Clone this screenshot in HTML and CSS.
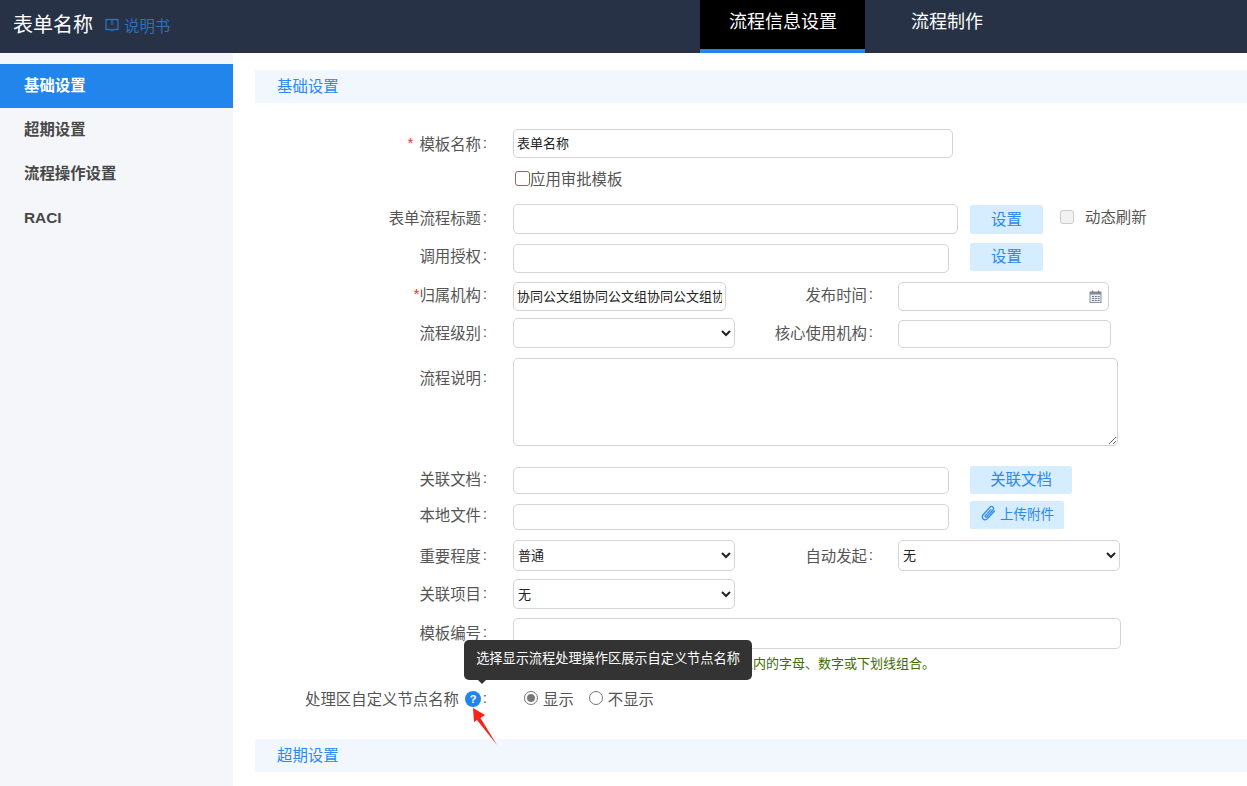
FILE: index.html
```html
<!DOCTYPE html>
<html lang="zh-CN">
<head>
<meta charset="utf-8">
<title>表单名称</title>
<link rel="stylesheet" href="styles.css">
</head>
<body>
<div class="app">
  <header class="topbar">
    <div class="brand">
      <span class="brand-title">表单名称</span>
      <a class="manual">
        <svg class="manual-icon" viewBox="0 0 14 14" width="14" height="14" fill="none" stroke="currentColor" stroke-width="1.3"><path d="M1 1.5h12v10H8.2L7 12.8 5.8 11.5H1z"/><path d="M7 2v5"/></svg>
        <span>说明书</span>
      </a>
    </div>
    <nav class="tabs">
      <a class="tab tab-active">流程信息设置</a>
      <a class="tab tab-next">流程制作</a>
    </nav>
  </header>
  <div class="main">
    <aside class="sidebar">
      <a class="side-item side-active">基础设置</a>
      <a class="side-item">超期设置</a>
      <a class="side-item">流程操作设置</a>
      <a class="side-item">RACI</a>
    </aside>
    <section class="content">
      <h2 class="bar">基础设置</h2>
      <form class="form">
        <div class="row r-name">
          <label class="label"><i class="req req-gap">*</i>模板名称<span class="colon">:</span></label>
          <input class="field w-440" type="text" value="表单名称">
        </div>
        <div class="row r-apply">
          <label class="apply"><input class="check-apply" type="checkbox">应用审批模板</label>
        </div>
        <div class="row r-title">
          <label class="label">表单流程标题<span class="colon">:</span></label>
          <div class="col-wide"><input class="field w-445" type="text"></div>
          <button class="btn b-set" type="button">设置</button>
          <label class="refresh"><input class="check-off" type="checkbox" disabled>动态刷新</label>
        </div>
        <div class="row r-auth">
          <label class="label">调用授权<span class="colon">:</span></label>
          <div class="col-wide"><input class="field w-436 nudge" type="text"></div>
          <button class="btn b-set b-short" type="button">设置</button>
        </div>
        <div class="row r-org">
          <label class="label"><i class="req">*</i>归属机构<span class="colon">:</span></label>
          <div class="col-half"><input class="field w-213" type="text" value="协同公文组协同公文组协同公文组协同公文组"></div>
          <label class="label label-2">发布时间<span class="colon">:</span></label>
          <div class="date">
            <input class="field w-211" type="text">
            <svg class="cal" viewBox="0 0 13 13" width="13" height="13"><rect x="1" y="2" width="11" height="10.5" fill="#eef0f6" stroke="#8a8f9a"/><rect x="1" y="2" width="11" height="2.5" fill="#7f8a96"/><path d="M3.5 .5v2.5M9.5 .5v2.5" stroke="#8c7a55" stroke-width="1.2"/><path d="M3 6.5h2M5.8 6.5h2M8.6 6.5h2M3 8.5h2M5.8 8.5h2M8.6 8.5h2M3 10.5h2M5.8 10.5h2M8.6 10.5h2" stroke="#6d7a92" stroke-width="1.2"/></svg>
          </div>
        </div>
        <div class="row r-level">
          <label class="label">流程级别<span class="colon">:</span></label>
          <div class="col-half"><select class="field select w-222 h-30"><option></option></select></div>
          <label class="label label-2">核心使用机构<span class="colon">:</span></label>
          <input class="field w-213 h-28 nudge-2" type="text">
        </div>
        <div class="row r-desc">
          <label class="label label-top">流程说明<span class="colon">:</span></label>
          <textarea class="field area"></textarea>
        </div>
        <div class="row r-doc">
          <label class="label">关联文档<span class="colon">:</span></label>
          <div class="col-wide"><input class="field w-436 h-27 nudge" type="text"></div>
          <button class="btn b-doc" type="button">关联文档</button>
        </div>
        <div class="row r-local">
          <label class="label">本地文件<span class="colon">:</span></label>
          <div class="col-wide"><input class="field w-436 h-26 nudge-3" type="text"></div>
          <button class="btn b-upload" type="button">
            <svg class="clip" viewBox="0 0 16 16" width="17" height="17" fill="none" stroke="currentColor" stroke-width="1.2" stroke-linecap="round"><path d="M13.6 5.6 7.2 12.6c-1.3 1.4-3.2 1.5-4.3.5s-1-2.8.3-4.2l6-6.6c.9-1 2.2-1.1 3-.4s.7 2-.2 3L6.6 11c-.5.5-1.1.6-1.5.2s-.3-1 .2-1.5l4.9-5.4"/></svg>上传附件
          </button>
        </div>
        <div class="row r-imp">
          <label class="label">重要程度<span class="colon">:</span></label>
          <div class="col-half"><select class="field select w-222"><option>普通</option></select></div>
          <label class="label label-2">自动发起<span class="colon">:</span></label>
          <select class="field select w-222"><option>无</option></select>
        </div>
        <div class="row r-proj">
          <label class="label">关联项目<span class="colon">:</span></label>
          <select class="field select w-222 h-30"><option>无</option></select>
        </div>
        <div class="row r-code">
          <label class="label">模板编号<span class="colon">:</span></label>
          <input class="field w-608" type="text">
        </div>
        <p class="hint">模板编号只能是长度限在三十二个字符以内的字母、数字或下划线组合。</p>
        <div class="row r-show">
          <label class="label"><span>处理区自定义节点名称</span><span class="help">?</span><span class="colon">:</span></label>
          <div class="radios">
            <label class="radio"><input class="radio-on" type="radio" name="show" checked>显示</label>
            <label class="radio"><input class="radio-on" type="radio" name="show">不显示</label>
          </div>
        </div>
      </form>
      <h2 class="bar bar-next">超期设置</h2>
    </section>
  </div>
  <div class="tooltip">选择显示流程处理操作区展示自定义节点名称</div>
  <svg class="pointer" viewBox="0 0 30 42" width="30" height="42"><polygon points="3,2 15,9 10.5,12 27,39 7,14 4,16" fill="#f5231b"/></svg>
</div>
</body>
</html>
```

FILE: styles.css
```css
* { box-sizing: border-box; }
html, body { margin: 0; padding: 0; height: 100%; overflow: hidden; }
body {
  font-family: "Liberation Sans", "Noto Sans CJK SC", sans-serif;
  font-size: 15.4px;
  color: #555;
  background: #fff;
}
.app { position: relative; height: 786px; display: flex; flex-direction: column; }

/* Top bar */
.topbar { height: 53px; flex: none; display: flex; background: #273246; color: #fff; }
.brand { width: 700px; display: flex; align-items: center; padding: 0 0 4px 13px; }
.brand-title { font-size: 20px; line-height: 26px; }
.manual { display: flex; align-items: center; margin-left: 12px; color: #2f6fb8; font-size: 15.4px; }
.manual-icon { margin: 1px 5px 0 0; }
.tabs { display: flex; }
.tab { font-size: 18px; line-height: 45px; height: 53px; color: #fff; }
.tab-active { width: 165px; padding-left: 29px; background: #000; border-bottom: 4px solid #2185ec; }
.tab-next { padding-left: 46px; }

/* Sidebar */
.main { flex: 1; display: flex; min-height: 0; }
.sidebar { width: 233px; flex: none; padding-top: 11px; background: #f5f6fa; }
.side-item { display: block; height: 44px; line-height: 43px; padding-left: 24px; font-weight: 700; color: #484848; }
.side-active { background: #2185ec; color: #fff; }

/* Content */
.content { flex: 1; min-width: 0; padding: 17px 0 0 22px; }
.bar { margin: 0; height: 33px; line-height: 33px; padding-left: 22px; background: #f2f7fe; color: #2a88ee; font-size: 15.4px; font-weight: 400; }
.bar-next { margin-top: 27px; }
.form { padding-top: 26px; }

.row { display: flex; align-items: flex-start; }
.label { width: 232px; flex: none; margin-right: 26px; display: flex; align-items: center; justify-content: flex-end; height: 28px; white-space: nowrap; }
.label-2 { width: 138px; margin-right: 25px; }
.label-top { height: 38px; }
.colon { width: 6px; text-align: right; }
.req { color: #e4392b; font-style: normal; }
.req-gap { margin-right: 6px; }

.field { display: block; height: 29px; padding: 0 3px 2px; border: 1px solid #d4d4d4; border-radius: 5px; background: #fff; font-family: inherit; font-size: 13px; color: #222; outline: none; }
.select { height: 31px; padding: 0; }
.w-440 { width: 440px; }
.w-445 { width: 445px; height: 30px; }
.w-436 { width: 436px; }
.w-213 { width: 213px; }
.w-211 { width: 211px; }
.w-222 { width: 222px; }
.w-608 { width: 608px; height: 31px; }
.h-26 { height: 26px; }
.h-27 { height: 27px; }
.h-28 { height: 28px; }
.h-30 { height: 30px; }
.nudge { margin-top: 1px; }
.nudge-2 { margin-top: 2px; }
.nudge-3 { margin-top: 3px; }
.area { width: 605px; height: 88px; resize: both; }
.col-wide { width: 457px; flex: none; }
.col-half { width: 222px; flex: none; }

.btn { height: 29px; padding: 0 0 4px; border: 0; border-radius: 2px; background: #d5edff; color: #2a88ee; font-family: inherit; font-size: 15.4px; }
.b-set { width: 73px; margin-top: 1px; }
.b-short { height: 28px; margin-top: 0; }
.b-doc { width: 102px; height: 28px; }
.b-upload { width: 94px; height: 28px; display: flex; align-items: center; justify-content: center; font-size: 13.5px; }
.clip { margin-right: 3px; }

.r-name .label { height: 27px; }
.r-apply { margin-top: 11px; margin-left: 258px; height: 18px; }
.apply { display: flex; align-items: center; height: 18px; margin-left: 2px; }
.check-apply { appearance: none; width: 15px; height: 15px; margin: 0; border: 1px solid #8a6d4d; border-radius: 3px; background: #fff; }
.r-title { margin-top: 17px; }
.r-title .label { height: 25px; }
.refresh { display: flex; align-items: center; height: 24px; margin-left: 17px; }
.check-off { appearance: none; width: 14px; height: 14px; margin: 2px 11px 0 0; border: 1px solid #ccc; border-radius: 3px; background: #f2f2f2; }
.r-auth { margin-top: 9px; }
.r-auth .label { height: 24px; }
.r-org { margin-top: 9px; }
.r-org .label { height: 24px; }
.date { position: relative; }
.cal { position: absolute; top: 8px; right: 7px; }
.r-level { margin-top: 7px; }
.r-desc { margin-top: 10px; }
.r-doc { margin-top: 20px; }
.r-doc .label { height: 24px; }
.r-local { margin-top: 7px; }
.r-local .label { height: 26px; }
.r-imp { margin-top: 10px; }
.r-imp .label { height: 30px; }
.r-proj { margin-top: 8px; }
.r-code { margin-top: 9px; }
.hint { margin: 8px 0 0 264px; height: 14px; line-height: 14px; font-size: 13px; color: #3f6b00; white-space: nowrap; }
.r-show { margin-top: 13px; }
.help { width: 16px; height: 16px; margin: 2px 0 0 6px; border-radius: 50%; background: #2185ec; color: #fff; font-size: 11px; font-weight: 700; line-height: 16px; text-align: center; }
.radios { display: flex; align-items: center; height: 28px; margin-left: 11px; }
.radio { display: flex; align-items: center; margin-right: 15px; }
.radio-on { appearance: none; width: 14px; height: 14px; margin: 0 5px 0 0; border: 1px solid #777; border-radius: 50%; background: #fff; }
.radio-on:checked { background: radial-gradient(circle, #777 0 3.5px, #fff 4.5px); }

/* Overlays */
.tooltip { position: absolute; left: 464px; top: 640px; width: 288px; height: 40px; border-radius: 5px; background: #333; color: #fff; font-size: 13.2px; line-height: 38px; text-align: center; }
.tooltip::after { content: ""; position: absolute; left: 14px; top: 100%; border: 4px solid transparent; border-top-color: #333; border-bottom: 0; }
.pointer { position: absolute; left: 470px; top: 706px; }
```
